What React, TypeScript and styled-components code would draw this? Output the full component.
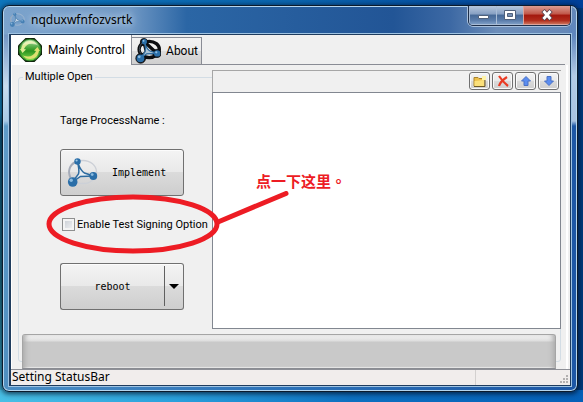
import React, { useState } from "react";
import styled, { createGlobalStyle } from "styled-components";

const GlobalStyle = createGlobalStyle`
  *, *::before, *::after { box-sizing: border-box; }
  body { margin: 0; font-family: "Noto Sans", sans-serif; color: #000; }
  button, input { font: inherit; color: inherit; margin: 0; }
`;

const Desktop = styled.div`
  display: flex;
  min-height: 100vh;
  padding: 5px 5px 10px 2px;
  background:
    linear-gradient(90deg, #48bfe5 0%, #2aa0dc 30%, #0d70c0 60%, #0560b8 100%) bottom / 100% 12px no-repeat,
    linear-gradient(90deg, #0d76bd 0%, #0b66b0 50%, #00409a 100%) top / 100% 8px no-repeat,
    linear-gradient(90deg, transparent 50%, #003a7c 50%),
    linear-gradient(180deg, #0f76b8 0%, #1384bb 28%, #0d5a7c 32%, #1f7184 70%, #3cb0d2 100%);
`;

const Window = styled.main`
  position: relative;
  flex: 1;
  display: flex;
  flex-direction: column;
  padding: 0 6px 5px;
  border: 1px solid #0c1b2c;
  border-radius: 7px;
  background:
    linear-gradient(180deg, transparent 28px, #7296c4 29px, #c9dcef 80px, #a9c9e6 115px, #5f9bc8 120px, #4f8fc0 100%) left / 8px 100% no-repeat,
    linear-gradient(180deg, #6488b8 0, #5f86bd 29px, #b4cbe6 70px, #a8c2e0 115px, #1d57a5 120px, #1d57a5 100%) right / 8px 100% no-repeat,
    linear-gradient(90deg, #4b8dc4, #2b71b8 50%, #1d57a5) bottom / 100% 8px no-repeat,
    linear-gradient(90deg, #7ba3cc 0%, #7199c5 22%, #2b66a5 32%, #225596 68%, #3d69a4 78%, #6c8db9 86%, #6487b7 100%);
  box-shadow: inset 0 0 0 1px #b5d5ed, 0 1px 5px 1px rgba(0, 12, 32, 0.7);
`;

const TitleBar = styled.header`
  display: flex;
  align-items: flex-start;
  height: 28px;
  gap: 6px;
`;

const TitleIcon = styled.span`
  margin-top: 6px;
  opacity: 0.65;
  line-height: 0;
`;

const Title = styled.h1`
  flex: 1;
  margin: 4px 0 0;
  font-size: 12px;
  line-height: 20px;
  font-weight: 400;
  text-shadow: 0 0 6px #d4e4f2, 0 0 12px #c4d8ec;
`;

const CaptionButtons = styled.div`
  display: flex;
  height: 20px;
  border: 1px solid #1e2f4a;
  border-top: 0;
  border-radius: 0 0 5px 5px;
  overflow: hidden;
  box-shadow: 0 1px 0 #a9c0dc, 1px 0 0 #a9c0dc, -1px 0 0 #a9c0dc;
`;

const CaptionButton = styled.button<{ $close?: boolean }>`
  width: ${(p) => (p.$close ? 47 : 27)}px;
  padding: 0;
  line-height: 0;
  border: 1px solid ${(p) => (p.$close ? "#dba39b" : "#a8bcd6")};
  border-width: 0 0 1px 1px;
  background: ${(p) =>
    p.$close
      ? "linear-gradient(180deg, #dc9d92 0, #c05648 45%, #a3180e 50%, #b02c1c 80%, #cc6f58 100%)"
      : "linear-gradient(180deg, #b6c7dd 0, #869fc2 45%, #456896 50%, #5b7dab 80%, #7c9cc4 100%)"};
`;

const Client = styled.div`
  flex: 1;
  display: flex;
  flex-direction: column;
  border: 1px solid #1f3c5e;
  border-width: 1px 1px 1px 2px;
  background: #f0f0f0;
  box-shadow: 0 0 0 1px #9fc3e2;
`;

const TabList = styled.div`
  display: flex;
  align-items: flex-end;
  height: 30px;
  border-bottom: 1px solid #898c95;
  margin-right: 5px;
`;

const Tab = styled.button<{ $active?: boolean }>`
  display: flex;
  align-items: center;
  gap: 5px;
  height: ${(p) => (p.$active ? 30 : 28)}px;
  margin-bottom: -1px;
  padding: 0 ${(p) => (p.$active ? 6 : 3)}px;
  border: 1px solid #898c95;
  border-width: ${(p) => (p.$active ? "0 1px 0 0" : "1px 1px 1px 0")};
  background: ${(p) => (p.$active ? "#fff" : "linear-gradient(180deg, #f2f2f2 0, #ebebeb 50%, #dcdcdc 51%, #cfcfcf 100%)")};
  font-family: Roboto, sans-serif;
  font-size: 12px;
  line-height: 18px;
  white-space: nowrap;
`;

const Page = styled.section`
  position: relative;
  flex: 1;
  display: flex;
  flex-direction: column;
  margin-right: 2px;
  padding: 5px 5px 0 9px;
  border: 2px solid #fff;
  border-width: 0 2px 0 1px;
`;

const GroupFrame = styled.div`
  position: absolute;
  inset: 12px 5px 7px 6px;
  border: 1px solid #d3dde5;
  border-radius: 3px;
`;

const Columns = styled.div`
  position: relative;
  flex: 1;
  display: grid;
  grid-template-columns: 191px 1fr;
`;

const Controls = styled.div`
  display: flex;
  flex-direction: column;
  align-items: flex-start;
  font-family: Roboto, Arial, sans-serif;
`;

const GroupTitle = styled.h2`
  margin: 0 0 30px 2px;
  padding: 0 2px;
  background: #f0f0f0;
  font-size: 11px;
  line-height: 14px;
  font-weight: 400;
`;

const ProcessLabel = styled.p`
  margin: 0 0 21px 39px;
  font-size: 11px;
  line-height: 14px;
`;

const raised = "linear-gradient(180deg, #f4f4f4 0, #e9e9e9 48%, #dbdbdb 50%, #cecece 100%)";

const BigButton = styled.button<{ $split?: boolean }>`
  display: flex;
  align-items: center;
  width: ${(p) => (p.$split ? 104 : 124)}px;
  height: 47px;
  padding: 0 5px;
  gap: 14px;
  justify-content: ${(p) => (p.$split ? "center" : "flex-start")};
  border: 1px solid #707070;
  border-width: ${(p) => (p.$split ? "1px 0 1px 1px" : "1px")};
  border-radius: ${(p) => (p.$split ? "3px 0 0 3px" : "3px")};
  background: ${raised};
  box-shadow: inset 0 1px 0 #fcfcfc;
  margin-left: ${(p) => (p.$split ? 0 : 39)}px;
  font-family: "DejaVu Sans Mono", monospace;
  font-size: 10px;
`;

const SplitButton = styled.div`
  display: flex;
  margin-left: 39px;
`;

const DropButton = styled.button`
  width: 20px;
  height: 47px;
  padding: 0;
  border: 1px solid #707070;
  border-left: 0;
  border-radius: 0 3px 3px 0;
  background: linear-gradient(#606060, #606060) 0 2px / 1px 40px no-repeat, ${raised};
  box-shadow: inset 0 1px 0 #fcfcfc;
  line-height: 0;
`;

const CheckLabel = styled.label`
  display: flex;
  align-items: center;
  gap: 2px;
  margin: 21px 0 31px 41px;
  font-size: 11px;
  line-height: 15px;
  white-space: nowrap;
`;

const Checkbox = styled.input`
  appearance: none;
  width: 13px;
  height: 13px;
  border: 1px solid #8e8f8f;
  background: linear-gradient(135deg, #c6cbd2, #f5f5f6);
  box-shadow: inset 0 0 0 2px #f4f4f4;
  &:checked { background: #3f62a5; }
`;

const ListPanel = styled.div`
  display: flex;
  flex-direction: column;
  background: #f0f0f0;
`;

const Toolbar = styled.div`
  display: flex;
  justify-content: flex-end;
  gap: 2px;
  height: 22px;
  padding: 1px 2px 0 0;
  border: 1px solid #a6a6a6;
  border-width: 1px 0 0 1px;
`;

const ToolButton = styled.button`
  display: grid;
  place-items: center;
  width: 21px;
  height: 18px;
  padding: 0;
  border: 1px solid #707070;
  border-radius: 3px;
  background: ${raised};
  box-shadow: inset 0 0 0 1px #fafafa;
`;

const ListBox = styled.div`
  flex: 1;
  border: 1px solid #828790;
  background: #fff;
`;

const Progress = styled.div`
  position: relative;
  height: 35px;
  margin: 5px 5px 0 1px;
  border: 1px solid #a5a5a5;
  border-bottom-color: #8a8c92;
  border-radius: 3px 3px 0 0;
  background: linear-gradient(180deg, #f4f4f4 0, #dedede 6px, #c9c9c9 7px, #c9c9c9 30px, #d6d6d6 100%);
  box-shadow: inset 5px 0 5px -3px #aaa, inset -5px 0 5px -3px #aaa, inset 0 -1px 0 #f0f0f0;
`;

const StatusBar = styled.footer`
  display: flex;
  height: 16px;
  border-top: 1px solid #8e9097;
  background: #f1edec;
  font-size: 12px;
  line-height: 14px;
`;

const StatusText = styled.span`
  flex: 1;
  padding-left: 1px;
  border-right: 1px solid #d3d0cf;
`;

const StatusEnd = styled.span`
  display: flex;
  align-items: flex-end;
  justify-content: flex-end;
  width: 94px;
  padding: 0 2px 2px 0;
`;

const Marking = styled.svg`
  position: absolute;
  left: 40px;
  top: 185px;
  pointer-events: none;
`;

const Note = styled.p`
  position: absolute;
  left: 253px;
  top: 164px;
  margin: 0;
  color: #ed1c24;
  font: 700 15px/22px "Noto Sans CJK TC", sans-serif;
`;

const Network = ({ size, dark }: { size: number; dark?: boolean }) => (
  <svg width={size} height={size} viewBox="0 0 32 32" aria-hidden="true">
    {dark ? (
      <g fill="none" stroke="#0b0d10">
        <ellipse cx="17.500" cy="14" rx="12.500" ry="10" strokeWidth="4" />
        <path d="M11 5l3 12-8 8M14 17l13 2M12 5l15 14" strokeWidth="4" />
        <circle cx="11" cy="5" r="4.500" fill="#0b0d10" />
        <circle cx="27" cy="19" r="5" fill="#0b0d10" />
        <circle cx="7" cy="25" r="6" fill="#0b0d10" />
        <path d="M7 19C3 13 7 5 14 3" stroke="#454d58" strokeWidth="1.200" />
      </g>
    ) : (
      <>
        <ellipse cx="17" cy="15" rx="13.500" ry="11.500" fill="none" stroke="#ccd0d7" strokeWidth="1.300" />
        <path d="M4.500 21C1.500 14 3.500 8 9.500 5" fill="none" stroke="#a5abb8" strokeWidth="2" />
      </>
    )}
    <path
      d="M11.500 5c1.500 6 2 9 1 12l-6 8 8-5.500 13-.5-9-3c-4-2-5-6-7-11z"
      fill={dark ? "#a9c3d6" : "#e7edf2"}
      stroke="#2d6b9f"
      strokeWidth="1.500"
    />
    <circle cx="11.500" cy="4.500" r="3.200" fill="#2a6ea8" />
    <circle cx="27.300" cy="19" r="3.900" fill="#2a6ea8" />
    <circle cx="6.700" cy="25" r="4.800" fill="#2a6ea8" />
    <circle cx="10.600" cy="3.500" r="1.100" fill="#9cc7e5" />
    <circle cx="26.200" cy="17.600" r="1.400" fill="#8cbce0" />
    <circle cx="5.200" cy="23.200" r="1.700" fill="#8cbce0" />
  </svg>
);

const RefreshIcon = () => (
  <svg width="26" height="26" viewBox="0 0 26 26" aria-hidden="true">
    <defs>
      <linearGradient id="orb" x1="0" y1="0" x2="0" y2="1">
        <stop offset="0" stopColor="#a9dc9c" />
        <stop offset="0.45" stopColor="#3da02f" />
        <stop offset="0.55" stopColor="#2c9420" />
        <stop offset="1" stopColor="#7fdc4c" />
      </linearGradient>
    </defs>
    <path d="M8.500 1h9L25 8.500v9L17.500 25h-9L1 17.500v-9z" fill="#10240d" />
    <circle cx="13" cy="13" r="11.300" fill="#2c7a26" />
    <circle cx="13" cy="13" r="10.300" fill="url(#orb)" />
    <path d="M4 12c1-5 4-8 9-8 3 0 5 1 7 3.500C14 5 9 7 7 12l2 .5-3.500 3.500L3 12z" fill="#dfeb94" />
    <path d="M22 14c-1 5-4 8-9 8-3 0-5-1-7-3.500 6 2.500 11 .5 13-4.500l-2-.5 3.500-3.500L23 14z" fill="#dde070" />
    <path d="M5 8.500C8 2 18 2 21 8.500c-5-2-11-2-16 0z" fill="#fff" opacity="0.350" />
  </svg>
);

const FolderIcon = () => (
  <svg width="14" height="13" viewBox="0 0 14 13" aria-hidden="true">
    <path d="M1 2.500h4l1 1h5V11H1z" fill="#eec04a" stroke="#a8832c" />
    <path d="M1.500 6l9.500-1v6H1.500z" fill="#fbe07a" />
    <path d="M1 11.500h11V4" fill="none" stroke="#6f5a26" />
    <path d="M9 1h4v4H9z" fill="#fff3a8" />
  </svg>
);

const DeleteIcon = () => (
  <svg width="12" height="12" viewBox="0 0 12 12" aria-hidden="true">
    <path d="M2 1c2 3 5 7 9 10M10 2C7 4 3 7 2 11" fill="none" stroke="#ea3b24" strokeWidth="2.200" />
  </svg>
);

const ArrowIcon = ({ down }: { down?: boolean }) => (
  <svg width="10" height="10" viewBox="0 0 10 10" aria-hidden="true">
    <path
      d={down ? "M3 .5h4V5h2.500L5 9.500.5 5H3z" : "M3 9.500h4V5h2.500L5 .5.5 5H3z"}
      fill="#5b8df0"
      stroke="#4a70c4"
    />
  </svg>
);

export default function App() {
  const [signing, setSigning] = useState(false);
  return (
    <>
      <GlobalStyle />
      <Desktop>
        <Window>
          <TitleBar>
            <TitleIcon><Network size={16} /></TitleIcon>
            <Title>nqduxwfnfozvsrtk</Title>
            <CaptionButtons>
              <CaptionButton aria-label="Minimize">
                <svg width="14" height="12"><path d="M2.500 6.500h10v3h-10z" fill="#fff" stroke="#50617b" /></svg>
              </CaptionButton>
              <CaptionButton aria-label="Maximize">
                <svg width="14" height="12">
                  <path d="M1.500 1.500h11v9h-11z" fill="#fff" stroke="#50617b" />
                  <path d="M4.500 4.500h5v3h-5z" fill="#7890b3" stroke="#50617b" />
                </svg>
              </CaptionButton>
              <CaptionButton $close aria-label="Close">
                <svg width="14" height="12">
                  <path d="M3 1.500l8 9M11 1.500l-8 9" stroke="#5a4450" strokeWidth="4.500" />
                  <path d="M3.500 2l7 8M10.500 2l-7 8" stroke="#fff" strokeWidth="2.800" />
                </svg>
              </CaptionButton>
            </CaptionButtons>
          </TitleBar>
          <Client>
            <TabList role="tablist">
              <Tab $active role="tab" aria-selected="true"><RefreshIcon />Mainly Control</Tab>
              <Tab role="tab" aria-selected="false"><Network size={26} dark />About</Tab>
            </TabList>
            <Page>
              <GroupFrame />
              <Columns>
                <Controls>
                  <GroupTitle>Multiple Open</GroupTitle>
                  <ProcessLabel>Targe ProcessName :</ProcessLabel>
                  <BigButton><Network size={32} />Implement</BigButton>
                  <CheckLabel>
                    <Checkbox type="checkbox" checked={signing} onChange={(e) => setSigning(e.target.checked)} />
                    Enable Test Signing Option
                  </CheckLabel>
                  <SplitButton>
                    <BigButton $split>reboot</BigButton>
                    <DropButton aria-label="More reboot options">
                      <svg width="10" height="5"><path d="M0 0h10L5 5z" /></svg>
                    </DropButton>
                  </SplitButton>
                </Controls>
                <ListPanel>
                  <Toolbar>
                    <ToolButton aria-label="Add"><FolderIcon /></ToolButton>
                    <ToolButton aria-label="Remove"><DeleteIcon /></ToolButton>
                    <ToolButton aria-label="Move up"><ArrowIcon /></ToolButton>
                    <ToolButton aria-label="Move down"><ArrowIcon down /></ToolButton>
                  </Toolbar>
                  <ListBox />
                </ListPanel>
              </Columns>
              <Progress role="progressbar" aria-label="Progress" aria-valuenow={0} />
            </Page>
            <StatusBar>
              <StatusText>Setting StatusBar</StatusText>
              <StatusEnd>
                <svg width="8" height="8" fill="#b3b0b0">
                  <path d="M6 0h2v2H6zM3 3h2v2H3zM6 3h2v2H6zM0 6h2v2H0zM3 6h2v2H3zM6 6h2v2H6z" />
                </svg>
              </StatusEnd>
            </StatusBar>
          </Client>
          <Marking width="255" height="70" viewBox="0 0 255 70" fill="none" stroke="#ed1c24" strokeWidth="5" aria-hidden="true">
            <ellipse cx="90" cy="33" rx="84" ry="27" />
            <path d="M175 31L243 2.500" strokeLinecap="round" />
          </Marking>
          <Note>点一下这里。</Note>
        </Window>
      </Desktop>
    </>
  );
}
